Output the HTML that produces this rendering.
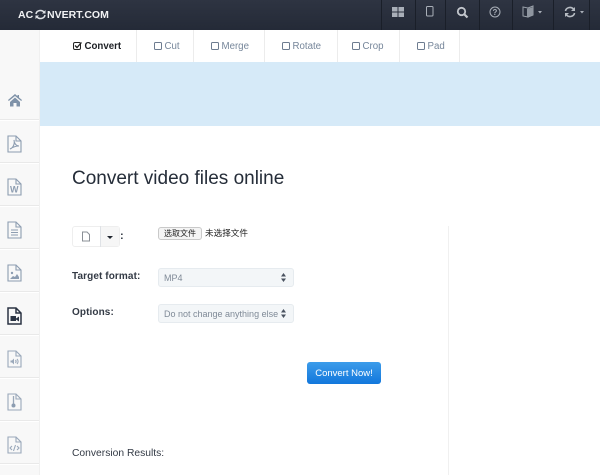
<!DOCTYPE html>
<html><head><meta charset="utf-8">
<style>
html,body{margin:0;padding:0;background:#fff}
body{width:600px;height:475px;position:relative;overflow:hidden;font-family:"Liberation Sans","Noto Sans CJK SC",sans-serif;color:#2b3440}
.a{position:absolute;white-space:nowrap}
#top{left:0;top:0;width:600px;height:30px;background:linear-gradient(#2e3442,#242a37)}
.sep{position:absolute;top:0;width:1px;height:30px;background:#1a1f29}
#side{left:0;top:30px;width:40px;height:445px;background:#f8f8f8}
.d{position:absolute;left:0;width:40px;height:1px;background:#e9e9e9;box-shadow:0 1px 0 #fff}
.tabsep{position:absolute;top:30px;width:1px;height:32px;background:#ececec}
.tab{position:absolute;top:41px;font-size:9.7px;line-height:12px;color:#76869a;white-space:nowrap}
.cb{display:inline-block;width:6px;height:6px;border:1px solid #6d7c90;border-radius:1.5px;margin-right:2.500px;vertical-align:-.5px}
.sel{position:absolute;left:158px;width:136px;height:19px;background:#f3f6f8;border:1px solid #e6ebef;border-radius:3px;box-sizing:border-box;font-size:9px;line-height:18px;color:#7f8a97;padding-left:5px;white-space:nowrap;overflow:hidden}
.lab{font-weight:bold;font-size:10px;color:#333a45;letter-spacing:.1px}
</style></head><body>
<div class="a" id="top"></div>
<div class="a" style="left:18px;top:8px;font-size:10.5px;line-height:15px;font-weight:bold;color:#f2f3f5">AC</div>
<svg class="a" style="left:35px;top:8px" width="11" height="13" viewBox="0 0 11 13"><path d="M1 6a4.500 4 0 0 1 8-2M10 7a4.500 4 0 0 1-8 2" fill="none" stroke="#dfe2e6" stroke-width="1.500"/><path d="M10.500 2v3.500H7zM.5 11V7.500H4z" fill="#dfe2e6"/></svg>
<div class="a" style="left:47px;top:8px;font-size:10.5px;line-height:15px;font-weight:bold;color:#f2f3f5">NVERT.COM</div>
<div class="sep" style="left:381px"></div><div class="sep" style="left:415px"></div><div class="sep" style="left:445px"></div><div class="sep" style="left:479px"></div><div class="sep" style="left:512px"></div><div class="sep" style="left:553px"></div><div class="sep" style="left:589px"></div>
<svg class="a" style="left:392px;top:6px" width="13" height="12" viewBox="0 0 13 12"><g fill="#a9afb8"><rect width="5.500" height="4.500" y="1"/><rect x="6.500" y="1" width="5.500" height="4.500"/><rect y="6.500" width="5.500" height="4.500"/><rect x="6.500" y="6.500" width="5.500" height="4.500"/></g></svg>
<svg class="a" style="left:425px;top:6px" width="10" height="12" viewBox="0 0 10 12"><rect x="1.500" y=".5" width="6.500" height="9.500" rx="1" fill="none" stroke="#a9afb8"/></svg>
<svg class="a" style="left:456px;top:6px" width="13" height="13" viewBox="0 0 13 13"><circle cx="5.500" cy="5.500" r="3.700" fill="none" stroke="#c2c6cc" stroke-width="1.800"/><path d="M8.500 8.500l3 3" stroke="#c2c6cc" stroke-width="2.200"/></svg>
<svg class="a" style="left:489px;top:6px" width="13" height="13" viewBox="0 0 13 13"><circle cx="6" cy="6" r="5" fill="none" stroke="#a9afb8"/><text x="6" y="9" font-size="8" text-anchor="middle" fill="#a9afb8" font-family="Liberation Sans" font-weight="bold">?</text></svg>
<svg class="a" style="left:522px;top:5px" width="22" height="14" viewBox="0 0 22 14"><path d="M1 2l5 1v9l-5-1zM6 3l5-2v9l-5 2z" fill="none" stroke="#9aa1aa"/><path d="M5 4l6-2v8l-6 2z" fill="#8e959f"/><path d="M16 6h4l-2 2.500z" fill="#a9afb8"/></svg>
<svg class="a" style="left:564px;top:5px" width="22" height="14" viewBox="0 0 22 14"><path d="M1.500 6a4.500 4 0 0 1 8-2M10.500 8a4.500 4 0 0 1-8 2" fill="none" stroke="#b6bbc2" stroke-width="1.600"/><path d="M11 2v4H7zM1 12V8h4z" fill="#b6bbc2"/><path d="M16 6h4l-2 2.500z" fill="#a9afb8"/></svg>

<div class="a" id="side"></div>
<div class="d" style="top:119px"></div><div class="d" style="top:162px"></div><div class="d" style="top:205px"></div><div class="d" style="top:248px"></div><div class="d" style="top:291px"></div><div class="d" style="top:334px"></div><div class="d" style="top:377px"></div><div class="d" style="top:420px"></div><div class="d" style="top:463px"></div>
<svg class="a" style="left:7px;top:93px" width="16" height="14" viewBox="0 0 16 14"><path d="M8 1L1 7l.8 1L8 3l6.200 5 .8-1-3-2.500V2h-1.500v1.200zM3 9l5-4.500L13 9v4.500H9.500V10h-3v3.500H3z" fill="#7f92a8"/></svg>
<svg class="a" style="left:7px;top:135px" width="15" height="18" viewBox="0 0 15 18" fill="none" stroke="#8d9db1" stroke-width="1.100"><path d="M1 1h8l5 5v11H1zM9 1v5h5"/><path d="M3 14c3-1 5-5 4-9 0 3 2 6 5 6-3 0-6 1-9 3z"/></svg>
<svg class="a" style="left:7px;top:178px" width="15" height="18" viewBox="0 0 15 18" fill="none" stroke="#8d9db1" stroke-width="1.100"><path d="M1 1h8l5 5v11H1zM9 1v5h5"/><text x="7.300" y="14.500" font-size="9" text-anchor="middle" font-family="Liberation Sans" fill="#8d9db1" stroke="none" font-weight="bold">W</text></svg>
<svg class="a" style="left:7px;top:221px" width="15" height="18" viewBox="0 0 15 18" fill="none" stroke="#8d9db1" stroke-width="1.100"><path d="M1 1h8l5 5v11H1zM9 1v5h5M4 9h7M4 11.500h7M4 14h7"/></svg>
<svg class="a" style="left:7px;top:264px" width="15" height="18" viewBox="0 0 15 18" fill="none" stroke="#8d9db1" stroke-width="1.100"><path d="M1 1h8l5 5v11H1zM9 1v5h5"/><circle cx="5" cy="9" r="1.200" fill="#8d9db1" stroke="none"/><path d="M3 15l3-3 2 1 2-3 2 3v2z" fill="#8d9db1" stroke="none"/></svg>
<svg class="a" style="left:7px;top:307px" width="15" height="18" viewBox="0 0 15 18" fill="none" stroke="#2a3343" stroke-width="1.500"><path d="M1 1h8l5 5v11H1zM9 1v5h5"/><rect x="3.500" y="9" width="5.500" height="5" fill="#2a3343" stroke="none"/><path d="M9 11.500l3-2v5l-3-2z" fill="#2a3343" stroke="none"/></svg>
<svg class="a" style="left:7px;top:350px" width="15" height="18" viewBox="0 0 15 18" fill="none" stroke="#9aa8ba" stroke-width="1.100"><path d="M1 1h8l5 5v11H1zM9 1v5h5"/><path d="M3.500 10.500h1.500l2-2v6l-2-2H3.500z" fill="#9aa8ba" stroke="none"/><path d="M8.500 10c.8 1 .8 2 0 3M10 9c1.400 1.500 1.400 3.500 0 5"/></svg>
<svg class="a" style="left:7px;top:393px" width="15" height="18" viewBox="0 0 15 18" fill="none" stroke="#9aa8ba" stroke-width="1.100"><path d="M1 1h8l5 5v11H1zM9 1v5h5"/><path d="M6.500 3v8" stroke-width="1.300"/><circle cx="6.500" cy="12.500" r="2" fill="#8d9db1" stroke="none"/></svg>
<svg class="a" style="left:7px;top:436px" width="15" height="18" viewBox="0 0 15 18" fill="none" stroke="#9aa8ba" stroke-width="1.100"><path d="M1 1h8l5 5v11H1zM9 1v5h5M5 10l-2 2 2 2M10 10l2 2-2 2M8.500 9l-2 6"/></svg>
<div class="a" style="left:39px;top:30px;width:1px;height:445px;background:#f0f0f0"></div>

<div class="tabsep" style="left:136px"></div><div class="tabsep" style="left:193px"></div><div class="tabsep" style="left:264px"></div><div class="tabsep" style="left:337px"></div><div class="tabsep" style="left:399px"></div><div class="tabsep" style="left:459px"></div>
<svg class="a" style="left:73px;top:41px" width="10" height="10" viewBox="0 0 10 10"><rect x=".5" y="1.500" width="7" height="7" rx="1.500" fill="none" stroke="#222"/><path d="M2 4.500l2 2 4.500-5" fill="none" stroke="#222" stroke-width="1.300"/></svg>
<div class="tab" style="left:84.500px;color:#1c1f24;font-weight:bold">Convert</div>
<div class="tab" style="left:154px"><span class="cb"></span>Cut</div>
<div class="tab" style="left:211px"><span class="cb"></span>Merge</div>
<div class="tab" style="left:282px"><span class="cb"></span>Rotate</div>
<div class="tab" style="left:352px"><span class="cb"></span>Crop</div>
<div class="tab" style="left:417px"><span class="cb"></span>Pad</div>

<div class="a" style="left:40px;top:62px;width:560px;height:64px;background:#d6eaf8"></div>

<div class="a" style="left:72px;top:167px;font-size:19px;line-height:24px;color:#252d39">Convert video files online</div>

<div class="a" style="left:72px;top:226px;width:48px;height:21px;border:1px solid #eeeeee;border-radius:3px;box-sizing:border-box;background:#fff"></div>
<div class="a" style="left:100px;top:226px;width:1px;height:21px;background:#dfe2e6"></div>
<div class="a" style="left:101px;top:227px;width:18px;height:19px;background:#f6f6f6"></div>
<svg class="a" style="left:81px;top:231px" width="10" height="11" viewBox="0 0 10 11"><path d="M1.500 1h4.500l2.500 2.500V10h-7z" fill="#fff" stroke="#8a8f96"/></svg>
<div class="a" style="left:107px;top:236px;width:0;height:0;border-left:3.500px solid transparent;border-right:3.500px solid transparent;border-top:3.500px solid #20262f"></div>
<div class="a" style="left:120px;top:230px;font-size:11px;line-height:13px;font-weight:bold;color:#333a45">:</div>

<div class="a" style="left:158px;top:227px;width:44px;height:13px;background:#f4f4f4;border:1px solid #c9c9c9;border-radius:3px;box-sizing:border-box;font-size:8px;line-height:11px;text-align:center;color:#222">选取文件</div>
<div class="a" style="left:205px;top:227px;font-size:8.6px;line-height:12px;color:#222">未选择文件</div>

<div class="a lab" style="left:72px;top:270px;line-height:13px">Target format:</div>
<div class="sel" style="top:268px">MP4</div>
<svg class="a" style="left:281px;top:273px" width="5" height="9" viewBox="0 0 5 9"><path d="M2.500 0L5 3.500H0zM2.500 9L0 5.500h5z" fill="#4a5360"/></svg>
<div class="a lab" style="left:72px;top:306px;line-height:13px">Options:</div>
<div class="sel" style="top:304px">Do not change anything else</div>
<svg class="a" style="left:281px;top:309px" width="5" height="9" viewBox="0 0 5 9"><path d="M2.500 0L5 3.500H0zM2.500 9L0 5.500h5z" fill="#4a5360"/></svg>

<div class="a" style="left:448px;top:226px;width:1px;height:249px;background:#f0f0f0"></div>
<div class="a" style="left:307px;top:362px;width:74px;height:22px;border-radius:3px;background:linear-gradient(#3c9cea,#1277dc);color:#fff;font-size:9.500px;line-height:23px;text-align:center">Convert Now!</div>
<div class="a" style="left:72px;top:447px;font-size:10.300px;line-height:14px;color:#333a45">Conversion Results:</div>
</body></html>
